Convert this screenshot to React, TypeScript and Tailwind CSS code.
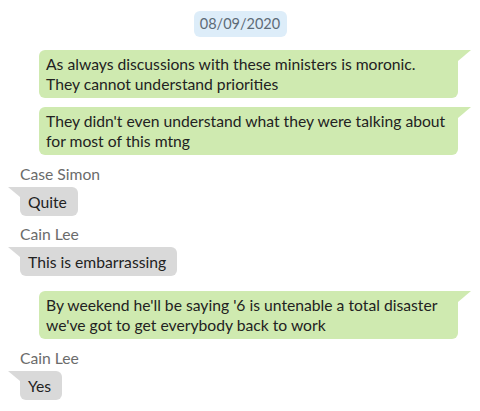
import React from 'react';

type Msg =
  | { kind: 'out'; text: string[]; mt: string }
  | { kind: 'in'; name: string; text: string; mt: string };

const messages: Msg[] = [
  {
    kind: 'out',
    mt: 'mt-[13px]',
    text: ['As always discussions with these ministers is moronic.', 'They cannot understand priorities'],
  },
  {
    kind: 'out',
    mt: 'mt-[9px]',
    text: ["They didn't even understand what they were talking about", 'for most of this mtng'],
  },
  { kind: 'in', mt: 'mt-[9px]', name: 'Case Simon', text: 'Quite' },
  { kind: 'in', mt: 'mt-[8px]', name: 'Cain Lee', text: 'This is embarrassing' },
  {
    kind: 'out',
    mt: 'mt-[15px]',
    text: ["By weekend he'll be saying '6 is untenable a total disaster", "we've got to get everybody back to work"],
  },
  { kind: 'in', mt: 'mt-[9px]', name: 'Cain Lee', text: 'Yes' },
];

const Outgoing: React.FC<{ lines: string[]; mt: string }> = ({ lines, mt }) => (
  <div className={`relative ml-[39px] w-[419px] ${mt}`}>
    <div className="rounded-[6px] rounded-tr-none bg-[#cfeab0] px-[7px] pt-[4px] pb-[4px] text-[15.7px] leading-[20px] text-[#222]">
      {lines.map((l, i) => (
        <div key={i}>{l}</div>
      ))}
    </div>
    {/* tail */}
    <svg className="absolute left-full top-0" width="13" height="11" viewBox="0 0 13 11">
      <path d="M0 0 H13 L0 11 Z" fill="#cfeab0" />
    </svg>
  </div>
);

const Incoming: React.FC<{ name: string; text: string; mt: string }> = ({ name, text, mt }) => (
  <div className={`pl-[20px] ${mt}`}>
    <div className="text-[15.7px] leading-[20px] text-[#6b6b6b]">{name}</div>
    <div className="relative mt-[3px] inline-block">
      <svg className="absolute right-full top-0" width="12" height="10" viewBox="0 0 12 10">
        <path d="M12 0 H0 L12 10 Z" fill="#d9d9d9" />
      </svg>
      <div className="rounded-[6px] rounded-tl-none bg-[#d9d9d9] pl-[8px] pr-[11px] py-[4.5px] text-[15.7px] leading-[20px] text-[#222]">
        {text}
      </div>
    </div>
  </div>
);

export default function App() {
  return (
    <div className="h-[411px] w-[480px] overflow-hidden bg-white font-['Lato','Noto_Sans',sans-serif]">
      <div className="flex justify-center pt-[11px]">
        <div className="flex h-[26px] w-[93px] items-center justify-center rounded-[6px] bg-[#ddedf9] text-[14.5px] text-[#5d6b77]">
          08/09/2020
        </div>
      </div>
      {messages.map((m, i) =>
        m.kind === 'out' ? (
          <Outgoing key={i} lines={m.text} mt={m.mt} />
        ) : (
          <Incoming key={i} name={m.name} text={m.text} mt={m.mt} />
        ),
      )}
    </div>
  );
}
